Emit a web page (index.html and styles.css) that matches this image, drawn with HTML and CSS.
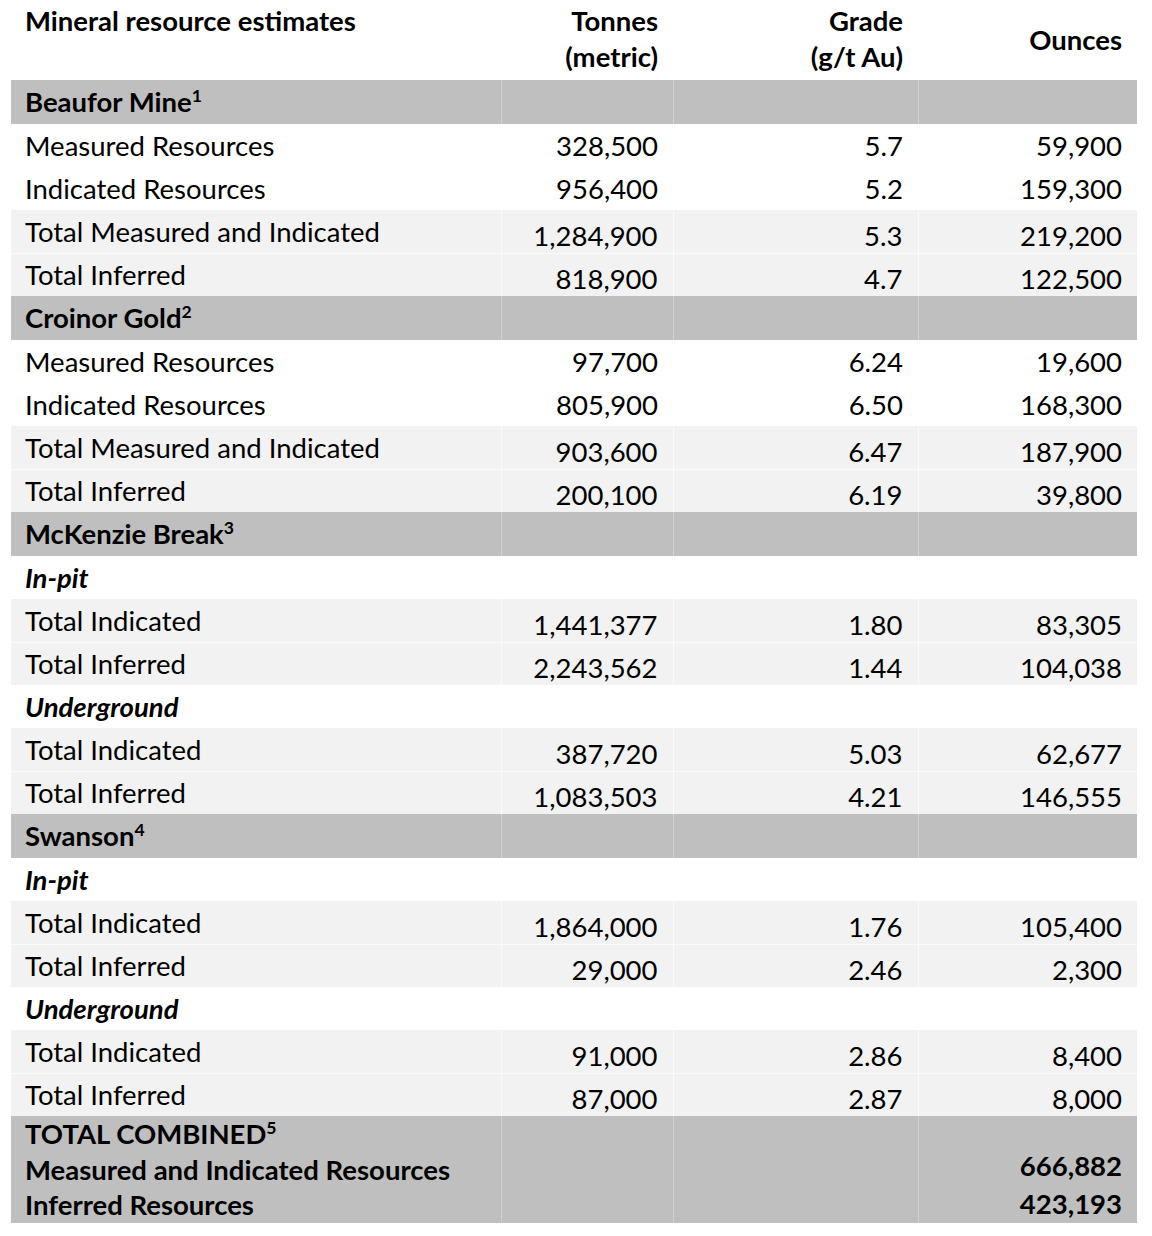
FILE: index.html
```html
<!DOCTYPE html>
<html lang="en">
<head>
<meta charset="utf-8">
<title>Mineral resource estimates</title>
<link rel="stylesheet" href="styles.css">
</head>
<body>
<table class="res">
  <colgroup>
    <col class="c1"><col class="c2"><col class="c3"><col class="c4">
  </colgroup>
  <thead>
    <tr class="head">
      <th class="lab top">Mineral resource estimates</th>
      <th class="num">Tonnes<br>(metric)</th>
      <th class="num">Grade<br>(g/t Au)</th>
      <th class="num mid">Ounces</th>
    </tr>
  </thead>
  <tbody>
    <tr class="sec"><td class="lab">Beaufor Mine<sup>1</sup></td><td></td><td></td><td></td></tr>
    <tr><td class="lab">Measured Resources</td><td class="num">328,500</td><td class="num">5.7</td><td class="num">59,900</td></tr>
    <tr><td class="lab">Indicated Resources</td><td class="num">956,400</td><td class="num">5.2</td><td class="num">159,300</td></tr>
    <tr class="lt"><td class="lab">Total Measured and Indicated</td><td class="num">1,284,900</td><td class="num">5.3</td><td class="num">219,200</td></tr>
    <tr class="lt"><td class="lab">Total Inferred</td><td class="num">818,900</td><td class="num">4.7</td><td class="num">122,500</td></tr>

    <tr class="sec"><td class="lab">Croinor Gold<sup>2</sup></td><td></td><td></td><td></td></tr>
    <tr><td class="lab">Measured Resources</td><td class="num">97,700</td><td class="num">6.24</td><td class="num">19,600</td></tr>
    <tr><td class="lab">Indicated Resources</td><td class="num">805,900</td><td class="num">6.50</td><td class="num">168,300</td></tr>
    <tr class="lt"><td class="lab">Total Measured and Indicated</td><td class="num">903,600</td><td class="num">6.47</td><td class="num">187,900</td></tr>
    <tr class="lt"><td class="lab">Total Inferred</td><td class="num">200,100</td><td class="num">6.19</td><td class="num">39,800</td></tr>

    <tr class="sec"><td class="lab">McKenzie Break<sup>3</sup></td><td></td><td></td><td></td></tr>
    <tr><td class="lab sub">In-pit</td><td></td><td></td><td></td></tr>
    <tr class="lt"><td class="lab">Total Indicated</td><td class="num">1,441,377</td><td class="num">1.80</td><td class="num">83,305</td></tr>
    <tr class="lt"><td class="lab">Total Inferred</td><td class="num">2,243,562</td><td class="num">1.44</td><td class="num">104,038</td></tr>
    <tr><td class="lab sub">Underground</td><td></td><td></td><td></td></tr>
    <tr class="lt"><td class="lab">Total Indicated</td><td class="num">387,720</td><td class="num">5.03</td><td class="num">62,677</td></tr>
    <tr class="lt"><td class="lab">Total Inferred</td><td class="num">1,083,503</td><td class="num">4.21</td><td class="num">146,555</td></tr>

    <tr class="sec"><td class="lab">Swanson<sup>4</sup></td><td></td><td></td><td></td></tr>
    <tr><td class="lab sub">In-pit</td><td></td><td></td><td></td></tr>
    <tr class="lt"><td class="lab">Total Indicated</td><td class="num">1,864,000</td><td class="num">1.76</td><td class="num">105,400</td></tr>
    <tr class="lt"><td class="lab">Total Inferred</td><td class="num">29,000</td><td class="num">2.46</td><td class="num">2,300</td></tr>
    <tr><td class="lab sub">Underground</td><td></td><td></td><td></td></tr>
    <tr class="lt"><td class="lab">Total Indicated</td><td class="num">91,000</td><td class="num">2.86</td><td class="num">8,400</td></tr>
    <tr class="lt"><td class="lab">Total Inferred</td><td class="num">87,000</td><td class="num">2.87</td><td class="num">8,000</td></tr>

    <tr class="sec total">
      <td class="lab">TOTAL COMBINED<sup>5</sup><br>Measured and Indicated Resources<br>Inferred Resources</td>
      <td></td><td></td>
      <td class="num tot">666,882<br>423,193</td>
    </tr>
  </tbody>
</table>
</body>
</html>
```
FILE: styles.css
```css
html, body { margin: 0; padding: 0; background: #fff; }
body {
  font-family: Lato, "Noto Sans", sans-serif;
  font-size: 27.5px;
  color: #000;
}
.res {
  margin-left: 11px;
  width: 1126px;
  border-collapse: collapse;
  table-layout: fixed;
}
.c1 { width: 490px; }
.c2 { width: 172px; }
.c3 { width: 245px; }
.c4 { width: 219px; }
.res td, .res th {
  padding: 0 15px 0 14px;
  height: 43px;
  line-height: 34px;
  vertical-align: middle;
  font-weight: normal;
  white-space: nowrap;
}
.res .lab { text-align: left; }
.res .num { text-align: right; }
.res .head th {
  font-weight: bold;
  height: 77px;
  line-height: 36px;
  vertical-align: top;
  padding-top: 3px;
  padding-bottom: 0;
}
.res .head th.mid { vertical-align: middle; padding-top: 0; height: 80px; }
.res .sec td { background: #bfbfbf; font-weight: bold; height: 44px; }
.res .sec td + td { border-left: 1px solid #d2d2d2; }
.res .lt td { background: #f2f2f2; }
.res .lt td + td { border-left: 1px solid #fafafa; }
.res .lt + .lt td { border-top: 1px solid #fafafa; height: 42px; }
.res .lt td.num { vertical-align: bottom; padding-bottom: 0; }
.res .sub { font-weight: bold; font-style: italic; }
sup { font-size: 0.64em; line-height: 0; vertical-align: 0.55em; }
.res .total td { height: 107px; line-height: 35.5px; vertical-align: middle; padding-top: 0; padding-bottom: 0; }
.res .total td.tot { vertical-align: bottom; font-weight: bold; line-height: 38px; }
```
